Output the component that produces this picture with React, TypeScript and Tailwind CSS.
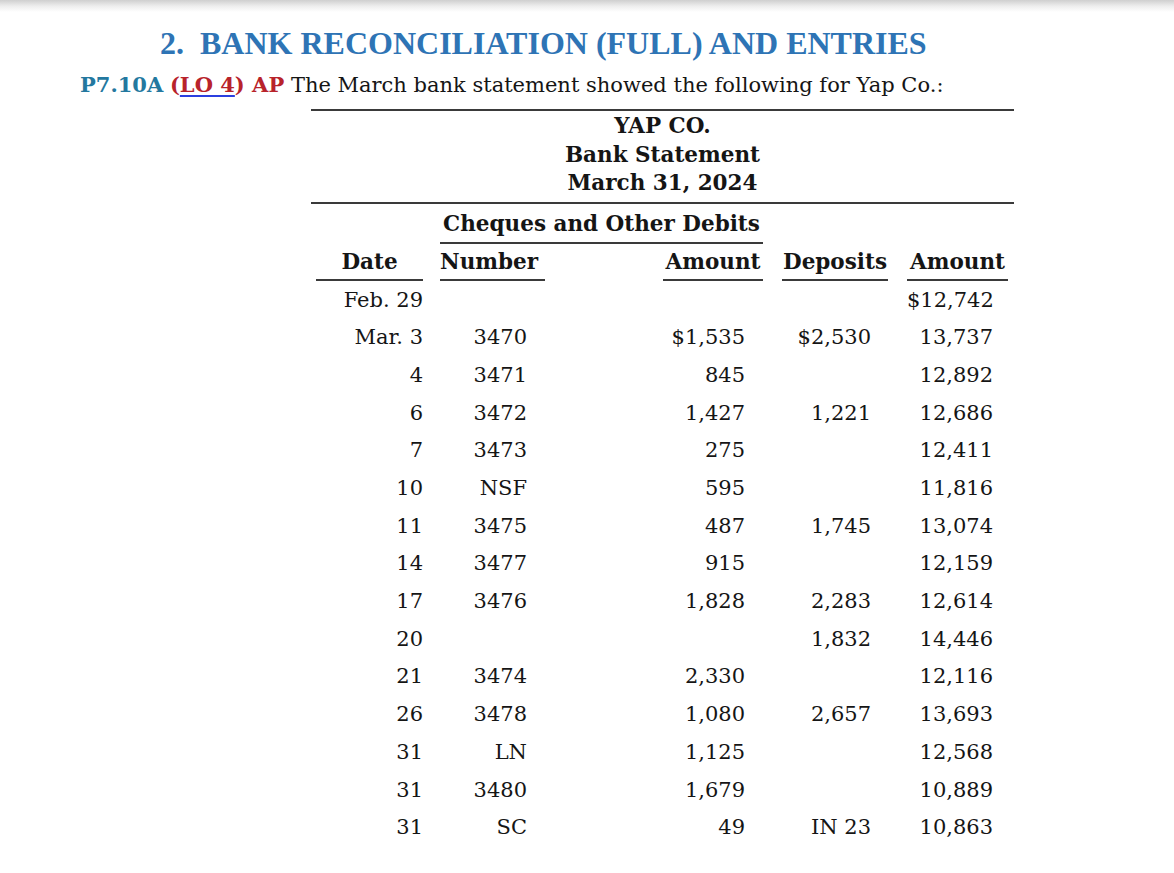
const ROWS = [
  { date: "Feb. 29", num: "", debit: "", deposit: "", balance: "$12,742" },
  { date: "Mar. 3", num: "3470", debit: "$1,535", deposit: "$2,530", balance: "13,737" },
  { date: "4", num: "3471", debit: "845", deposit: "", balance: "12,892" },
  { date: "6", num: "3472", debit: "1,427", deposit: "1,221", balance: "12,686" },
  { date: "7", num: "3473", debit: "275", deposit: "", balance: "12,411" },
  { date: "10", num: "NSF", debit: "595", deposit: "", balance: "11,816" },
  { date: "11", num: "3475", debit: "487", deposit: "1,745", balance: "13,074" },
  { date: "14", num: "3477", debit: "915", deposit: "", balance: "12,159" },
  { date: "17", num: "3476", debit: "1,828", deposit: "2,283", balance: "12,614" },
  { date: "20", num: "", debit: "", deposit: "1,832", balance: "14,446" },
  { date: "21", num: "3474", debit: "2,330", deposit: "", balance: "12,116" },
  { date: "26", num: "3478", debit: "1,080", deposit: "2,657", balance: "13,693" },
  { date: "31", num: "LN", debit: "1,125", deposit: "", balance: "12,568" },
  { date: "31", num: "3480", debit: "1,679", deposit: "", balance: "10,889" },
  { date: "31", num: "SC", debit: "49", deposit: "IN 23", balance: "10,863" },
];

function HeaderCell({ label, className }: { label: string; className: string }) {
  return (
    <div className={className}>
      <div className="h-[28px] whitespace-nowrap text-center text-[21.5px] font-bold leading-[28px]">{label}</div>
      <div className="mt-[3px] h-[2px] bg-[#3a3a3a]" />
    </div>
  );
}

export default function App() {
  return (
    <div className="min-h-screen bg-white font-['DejaVu_Serif',serif] text-[#151515]">
      <div className="h-[12px] bg-gradient-to-b from-[#cfcfcf] via-[#ededed] to-white" />

      <div className="pl-[80px]">
        <h1 className="ml-[80px] mt-[13px] font-['Liberation_Serif',serif] text-[32px] font-bold leading-[36px] text-[#2e74b5]">
          2.&nbsp;&nbsp;BANK RECONCILIATION (FULL) AND ENTRIES
        </h1>

        <p className="mt-[12px] whitespace-nowrap text-[21px] leading-[24px]">
          <span className="font-bold text-[#23789f]">P7.10A</span>{" "}
          <span className="font-bold text-[#b8232b]">
            (<span className="underline decoration-[#2b3fe0] decoration-[1.5px] underline-offset-[3px]">LO 4</span>) AP
          </span>{" "}
          The March bank statement showed the following for Yap Co.:
        </p>

        <div className="ml-[231px] mt-[12px] w-[703px] text-[21px]">
          <div className="h-[2px] bg-[#3a3a3a]" />
          <div className="pt-[1px] text-center text-[21.5px] font-bold leading-[28.5px]">
            <div>YAP CO.</div>
            <div>Bank Statement</div>
            <div>March 31, 2024</div>
          </div>
          <div className="mt-[4px] h-[2px] bg-[#3a3a3a]" />

          <div className="ml-[129px] mt-[6px] w-[323px]">
            <div className="h-[28px] whitespace-nowrap text-center text-[21.5px] font-bold leading-[28px]">
              Cheques and Other Debits
            </div>
            <div className="mt-[4px] h-[2px] bg-[#3a3a3a]" />
          </div>

          <div className="mt-[4px] flex">
            <HeaderCell label="Date" className="ml-[5px] w-[107px]" />
            <div className="ml-[17px] w-[105px]">
              <div className="h-[28px] text-[21.5px] font-bold leading-[28px]">Number</div>
              <div className="mt-[3px] h-[2px] bg-[#3a3a3a]" />
            </div>
            <HeaderCell label="Amount" className="ml-[118px] w-[100px]" />
            <HeaderCell label="Deposits" className="ml-[19px] w-[106px]" />
            <HeaderCell label="Amount" className="ml-[19px] w-[101px]" />
          </div>

          <div className="mt-[1px]">
            {ROWS.map((r, i) => (
              <div key={i} className="flex h-[37.7px] items-center">
                <div className="ml-[5px] w-[107px] text-right">{r.date}</div>
                <div className="ml-[17px] w-[105px] pr-[18px] text-right">{r.num}</div>
                <div className="ml-[118px] w-[100px] pr-[18px] text-right">{r.debit}</div>
                <div className="ml-[19px] w-[106px] pr-[17px] text-right">{r.deposit}</div>
                <div className="ml-[19px] w-[101px] pr-[15px] text-right">{r.balance}</div>
              </div>
            ))}
          </div>
        </div>
      </div>
    </div>
  );
}
